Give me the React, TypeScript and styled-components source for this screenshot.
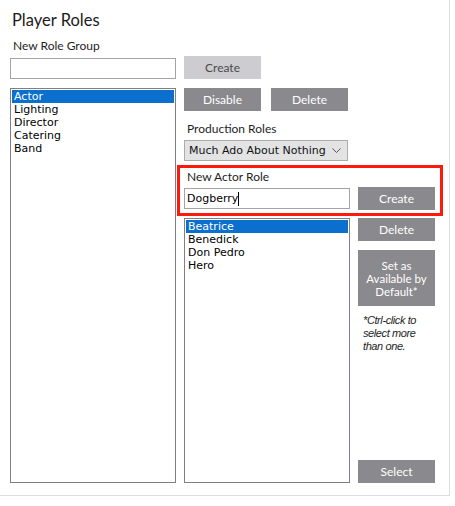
import styled, { createGlobalStyle } from 'styled-components';

const roleGroups = ['Actor', 'Lighting', 'Director', 'Catering', 'Band'];
const actorRoles = ['Beatrice', 'Benedick', 'Don Pedro', 'Hero'];

const GlobalStyle = createGlobalStyle`
  body {
    margin: 0;
    background: #ffffff;
    font-family: Lato, "Liberation Sans", sans-serif;
  }
`;

const App: React.FC = () => {
  return (
    <>
      <GlobalStyle />
      <Panel>
        <Title>Player Roles</Title>
        <Body>
          <LeftColumn>
            <FieldLabel>New Role Group</FieldLabel>
            <TextBox />
            <ListBox $grow>
              {roleGroups.map((group, idx) => (
                <ListItem key={group} $selected={idx === 0}>
                  {group}
                </ListItem>
              ))}
            </ListBox>
          </LeftColumn>
          <RightColumn>
            <Button $variant="light" style={{ marginTop: 18 }}>
              Create
            </Button>
            <ButtonRow>
              <Button $variant="dark">Disable</Button>
              <Button $variant="dark">Delete</Button>
            </ButtonRow>
            <FieldLabel style={{ marginTop: 10 }}>Production Roles</FieldLabel>
            <Dropdown>
              <span>Much Ado About Nothing</span>
              <svg width="9" height="5" viewBox="0 0 9 5">
                <polyline
                  points="0.5,0.5 4.5,4.5 8.5,0.5"
                  fill="none"
                  stroke="#555"
                  strokeWidth="1"
                />
              </svg>
            </Dropdown>
            <Highlight>
              <FieldLabel>New Actor Role</FieldLabel>
              <InputRow>
                <TextBox $inline>
                  Dogberry
                  <Caret />
                </TextBox>
                <Button $variant="dark">Create</Button>
              </InputRow>
            </Highlight>
            <RolesArea>
              <ListBox $width={166}>
                {actorRoles.map((role, idx) => (
                  <ListItem key={role} $selected={idx === 0}>
                    {role}
                  </ListItem>
                ))}
              </ListBox>
              <ButtonColumn>
                <Button $variant="dark">Delete</Button>
                <TallButton>
                  <span>Set as</span>
                  <span>Available by</span>
                  <span>Default*</span>
                </TallButton>
                <Note>
                  <span>*Ctrl-click to</span>
                  <span>select more</span>
                  <span>than one.</span>
                </Note>
                <Button $variant="dark" style={{ marginTop: 'auto' }}>
                  Select
                </Button>
              </ButtonColumn>
            </RolesArea>
          </RightColumn>
        </Body>
      </Panel>
    </>
  );
};

export default App;

const Panel = styled.div`
  width: 450px;
  height: 496px;
  box-sizing: border-box;
  border-right: 1px solid #dddbe3;
  border-bottom: 1px solid #dddbe3;
  padding: 10px 0 0 10px;
  display: flex;
  flex-direction: column;
`;

const Title = styled.div`
  font-size: 16.5px;
  line-height: 20px;
  margin-left: 2px;
  color: #1b1b1b;
`;

const Body = styled.div`
  flex: 1;
  display: flex;
  gap: 8px;
  margin-top: 8px;
  padding-bottom: 12px;
  min-height: 0;
`;

const LeftColumn = styled.div`
  width: 166px;
  display: flex;
  flex-direction: column;
`;

const RightColumn = styled.div`
  width: 251px;
  display: flex;
  flex-direction: column;
`;

const FieldLabel = styled.div`
  font-size: 12px;
  line-height: 16px;
  margin-left: 3px;
  color: #1e1e1e;
`;

const TextBox = styled.div<{ $inline?: boolean }>`
  width: 166px;
  height: 21px;
  box-sizing: border-box;
  border: 1px solid #a3a3a8;
  margin-top: ${({ $inline }) => ($inline ? 0 : 4)}px;
  padding-left: 2px;
  display: flex;
  align-items: center;
  font-family: "DejaVu Sans", Verdana, sans-serif;
  font-size: 11px;
  color: #000;
`;

const Caret = styled.span`
  display: inline-block;
  width: 1px;
  height: 14px;
  background: #000;
`;

const ListBox = styled.div<{ $grow?: boolean; $width?: number }>`
  ${({ $grow }) => ($grow ? 'flex: 1; margin-top: 9px;' : '')}
  width: ${({ $width }) => ($width ? `${$width}px` : 'auto')};
  box-sizing: border-box;
  border: 1px solid #7f7e8a;
  padding: 1px;
  font-family: "DejaVu Sans", Verdana, sans-serif;
  font-size: 11px;
`;

const ListItem = styled.div<{ $selected?: boolean }>`
  height: 13px;
  line-height: 13px;
  padding-left: 2px;
  color: ${({ $selected }) => ($selected ? '#ffffff' : '#000000')};
  background: ${({ $selected }) => ($selected ? '#0a6fcd' : 'transparent')};
`;

const Button = styled.button<{ $variant: 'light' | 'dark' }>`
  width: 77px;
  height: 23px;
  flex-shrink: 0;
  border: none;
  padding: 0;
  font-family: Lato, "Liberation Sans", sans-serif;
  font-size: 12px;
  background: ${({ $variant }) => ($variant === 'light' ? '#cdccd1' : '#8a898d')};
  color: ${({ $variant }) => ($variant === 'light' ? '#4a4a4a' : '#ffffff')};
`;

const ButtonRow = styled.div`
  display: flex;
  gap: 10px;
  margin-top: 9px;
`;

const Dropdown = styled.div`
  width: 164px;
  height: 21px;
  box-sizing: border-box;
  margin-top: 3px;
  border: 1px solid #acacac;
  background: #e3e3e4;
  display: flex;
  align-items: center;
  justify-content: space-between;
  padding: 0 6px 0 4px;
  font-family: "DejaVu Sans", Verdana, sans-serif;
  font-size: 11px;
  color: #111;
`;

const Highlight = styled.div`
  margin: 4px -8px 0 -7px;
  border: 3px solid #fb1a0c;
  padding: 1px 5px 3px 4px;
`;

const InputRow = styled.div`
  display: flex;
  align-items: center;
  gap: 8px;
  margin-top: 2px;
`;

const RolesArea = styled.div`
  flex: 1;
  display: flex;
  gap: 8px;
  margin-top: 2px;
`;

const ButtonColumn = styled.div`
  width: 77px;
  display: flex;
  flex-direction: column;
`;

const TallButton = styled.div`
  height: 56px;
  margin-top: 9px;
  background: #8a898d;
  color: #ffffff;
  font-size: 11.5px;
  line-height: 13px;
  display: flex;
  flex-direction: column;
  align-items: center;
  justify-content: center;
  text-align: center;

  span {
    display: block;
    height: 13px;
  }
`;

const Note = styled.div`
  margin-top: 8px;
  padding-left: 5px;
  display: flex;
  flex-direction: column;
  font-family: "Liberation Sans", Arial, sans-serif;
  font-size: 11px;
  line-height: 13px;
  letter-spacing: -0.4px;
  font-style: italic;
  color: #1e1e1e;

  span {
    display: block;
    height: 13px;
  }
`;
